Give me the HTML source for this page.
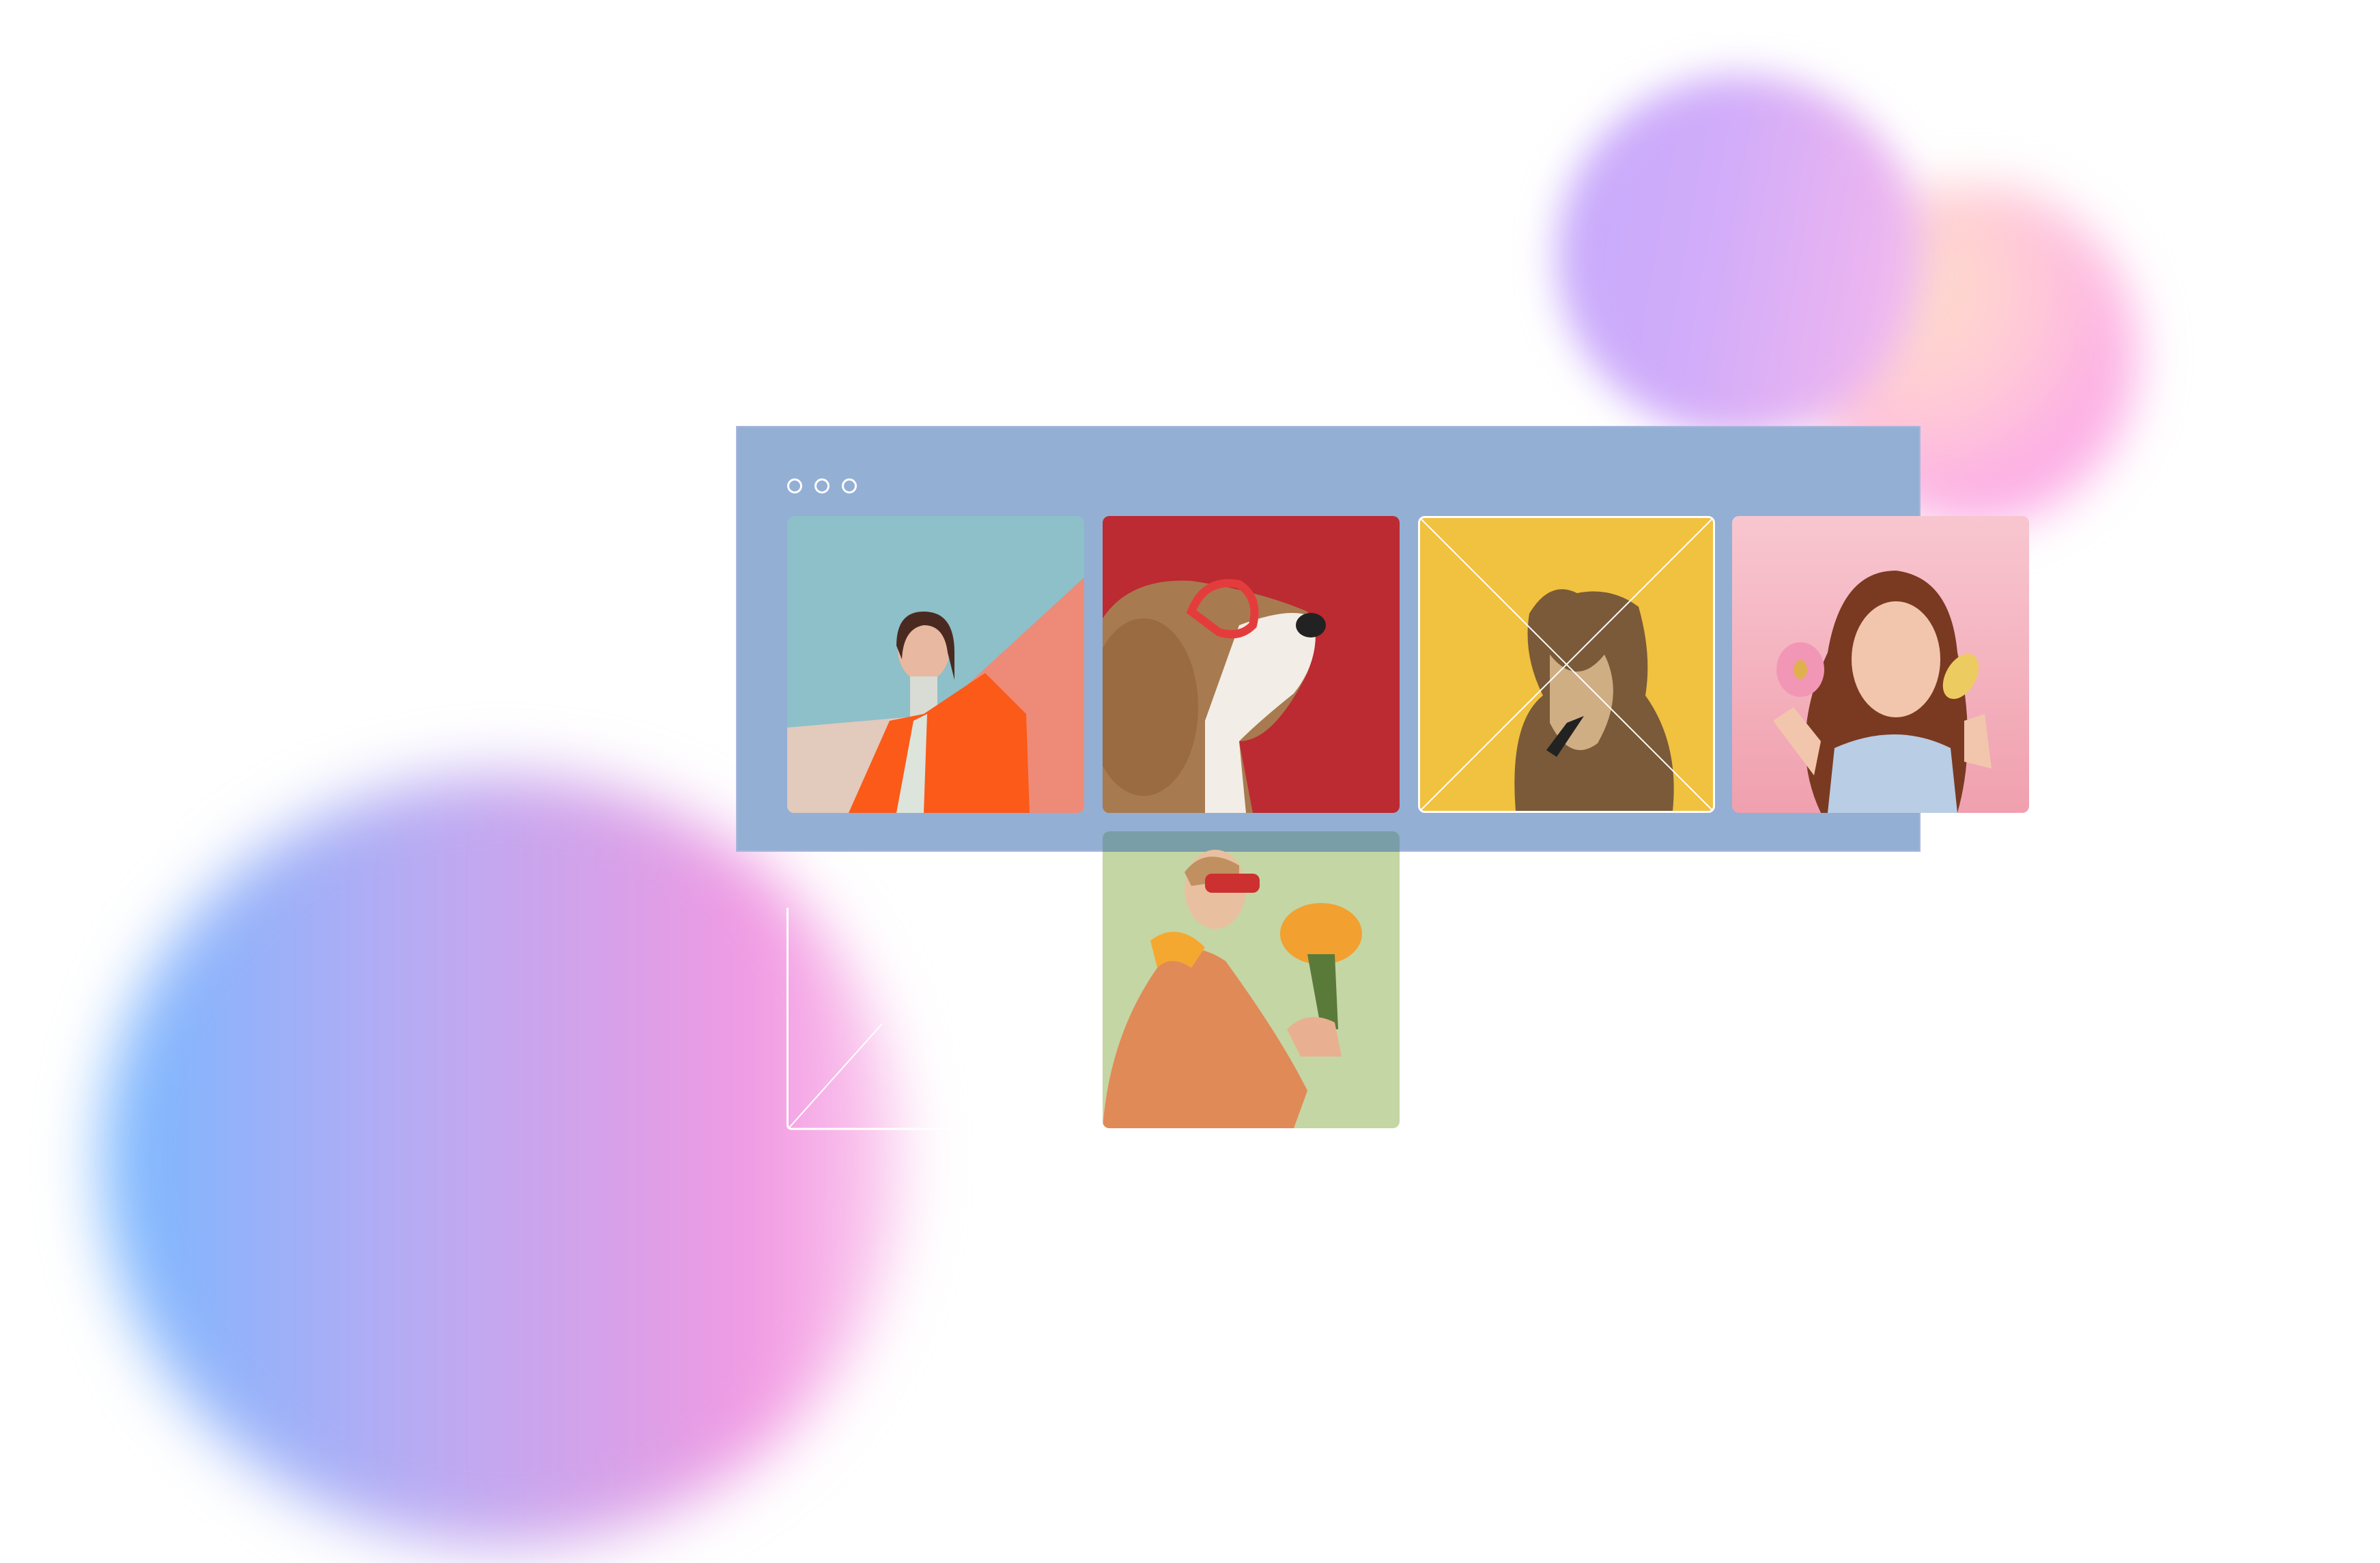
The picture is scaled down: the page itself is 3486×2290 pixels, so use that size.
<!DOCTYPE html>
<html><head><meta charset="utf-8"><style>
html,body{margin:0;padding:0;background:#fff;}
body{width:3486px;height:2290px;position:relative;overflow:hidden;font-family:"Liberation Sans",sans-serif;}
.abs{position:absolute;}
.blob1{left:150px;top:1135px;width:1170px;height:1130px;border-radius:50%;background:linear-gradient(90deg,#78b8ff 0%,#9cb0f8 22%,#bcaaf2 42%,#d8a0e8 65%,#f29ae2 82%,#fcd0f0 100%);filter:blur(45px);}
.blob2{left:2650px;top:270px;width:480px;height:500px;border-radius:50%;background:radial-gradient(circle at 30% 30%,#ffe0c8 0%,#ffc8d8 40%,#fcacE6 70%,#fcc0ee 100%);filter:blur(35px);}
.blob3{left:2280px;top:110px;width:540px;height:530px;border-radius:50%;background:linear-gradient(100deg,#c6aafc 0%,#d0acfa 40%,#eab4f0 80%,#f6c4ee 100%);filter:blur(28px);}
.panel{left:1078px;top:624px;width:1735px;height:624px;background:#93afd4;border:2px solid #a9b6dc;box-sizing:border-box;}
.dot{width:22px;height:22px;border:3px solid #fff;border-radius:50%;box-sizing:border-box;top:701px;}
.tile{width:435px;height:435px;border-radius:10px;overflow:hidden;top:756px;}
</style></head><body>
<div class="abs blob1"></div>
<div class="abs blob2"></div>
<div class="abs blob3"></div>
<div class="abs panel"></div>
<div class="abs dot" style="left:1153px"></div>
<div class="abs dot" style="left:1193px"></div>
<div class="abs dot" style="left:1233px"></div>

<!-- tile 1 -->
<div class="abs tile" style="left:1153px">
<svg width="435" height="435" viewBox="0 0 435 435">
<rect width="435" height="435" fill="#8dc0c8"/>
<polygon points="0,310 0,435 435,435 435,90 270,260 230,290" fill="#e2cabc"/>
<polygon points="435,90 250,260 300,435 435,435" fill="#ee8a78"/>
<polygon points="160,330 230,290 300,435 160,435" fill="#e6d0c0"/>
<ellipse cx="200" cy="195" rx="38" ry="48" fill="#e8b8a0"/>
<path d="M160,190 Q160,140 200,140 Q245,140 245,200 L245,240 L235,200 Q230,160 200,160 Q170,165 168,210Z" fill="#4a2a20"/>
<rect x="180" y="235" width="40" height="60" fill="#d8dcd4"/>
<path d="M90,435 L150,300 L200,290 L290,230 L350,290 L355,435Z" fill="#fb5a18"/>
<path d="M160,435 L185,300 L205,290 L200,435Z" fill="#dde4dc"/>
</svg></div>

<!-- tile 2 -->
<div class="abs tile" style="left:1615px">
<svg width="435" height="435" viewBox="0 0 435 435">
<rect width="435" height="435" fill="#bc2a32"/>
<path d="M0,150 Q40,90 130,95 Q230,110 300,140 Q320,180 300,230 Q250,330 200,330 L220,435 L0,435Z" fill="#a87a50"/>
<path d="M200,160 Q280,130 310,150 Q320,210 280,260 Q230,300 200,330 L210,435 L150,435 L150,300Z" fill="#f2ede6"/>
<ellipse cx="60" cy="280" rx="80" ry="130" fill="#9a6a40"/>
<path d="M130,140 Q150,90 200,100 Q230,120 220,160 Q200,180 170,170Z" fill="none" stroke="#e43c3c" stroke-width="12"/>
<ellipse cx="305" cy="160" rx="22" ry="18" fill="#222"/>
</svg></div>

<!-- tile 3 -->
<div class="abs tile" style="left:2077px;border:3px solid #fff;box-sizing:border-box">
<svg width="429" height="429" viewBox="0 0 429 429">
<rect width="429" height="429" fill="#f1c140"/>
<path d="M140,429 Q130,300 180,260 Q150,200 160,140 Q190,90 230,110 Q280,100 320,130 Q340,200 330,260 Q380,330 370,429Z" fill="#7a5a38"/>
<path d="M190,200 Q230,250 270,200 Q300,260 260,330 Q220,360 190,300Z" fill="#d0ae84"/>
<polygon points="215,300 240,290 200,350 185,340" fill="#222"/>
<line x1="0" y1="0" x2="429" y2="429" stroke="#fff" stroke-width="2"/>
<line x1="429" y1="0" x2="0" y2="429" stroke="#fff" stroke-width="2"/>
</svg></div>

<!-- tile 4 -->
<div class="abs tile" style="left:2537px">
<svg width="439" height="435" viewBox="0 0 439 435">
<defs><linearGradient id="pk" x1="0" y1="0" x2="0" y2="1"><stop offset="0" stop-color="#f8c6d0"/><stop offset="1" stop-color="#f0a0ae"/></linearGradient></defs>
<rect width="439" height="435" fill="url(#pk)"/>
<path d="M130,435 Q80,330 140,200 Q160,80 240,80 Q320,90 330,200 Q360,330 330,435Z" fill="#7a3a22"/>
<ellipse cx="240" cy="210" rx="65" ry="85" fill="#f2c6ac"/>
<path d="M140,435 L150,340 Q240,300 320,340 L330,435Z" fill="#b9cde4"/>
<ellipse cx="100" cy="225" rx="35" ry="40" fill="#f296b6"/>
<ellipse cx="100" cy="225" rx="10" ry="14" fill="#e0b050"/>
<ellipse cx="335" cy="235" rx="22" ry="36" fill="#eccc60" transform="rotate(30 335 235)"/>
<path d="M60,300 L90,280 L130,330 L120,380Z" fill="#f2c6ac"/>
<path d="M340,300 L370,290 L380,370 L340,360Z" fill="#f2c6ac"/>
</svg></div>

<!-- ghost tile -->
<svg class="abs" style="left:1152px;top:1330px" width="250" height="330" viewBox="0 0 250 330">
<path d="M1.5,0 L1.5,318 Q1.5,324 8,324 L250,324" fill="none" stroke="#fff" stroke-width="3"/>
<line x1="4" y1="322" x2="140" y2="170" stroke="#fff" stroke-width="2"/>
</svg>

<!-- tile 5 -->
<div class="abs" style="left:1615px;top:1218px;width:435px;height:435px;border-radius:10px;overflow:hidden">
<svg width="435" height="435" viewBox="0 0 435 435">
<rect width="435" height="435" fill="#c4d6a4"/>
<rect width="435" height="30" fill="#7a9ea8"/>
<path d="M0,435 Q10,300 80,200 Q120,150 180,190 Q260,300 300,380 L280,435Z" fill="#e08a58"/>
<path d="M70,160 Q110,130 150,170 L130,200 Q100,180 80,200Z" fill="#f5a830"/>
<ellipse cx="165" cy="85" rx="45" ry="58" fill="#e8c0a0"/>
<path d="M120,60 Q150,20 200,50 L200,70 L130,80Z" fill="#c09060"/>
<rect x="150" y="62" width="80" height="28" rx="10" fill="#cc3030"/>
<ellipse cx="320" cy="150" rx="60" ry="45" fill="#f2a030"/>
<path d="M300,180 L320,290 L345,290 L340,180Z" fill="#5a7a3a"/>
<path d="M270,290 Q300,260 340,280 L350,330 L290,330Z" fill="#e8b090"/>
</svg></div>
</body></html>
